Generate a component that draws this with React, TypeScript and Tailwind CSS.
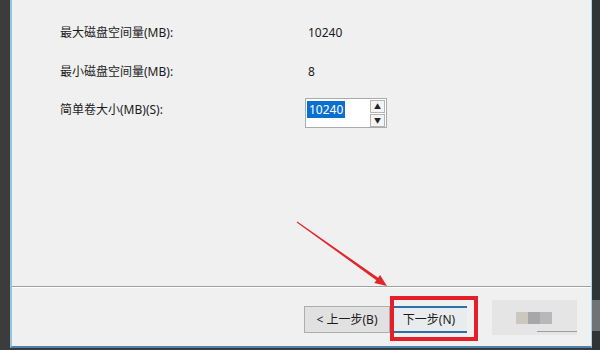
import React from "react";

const font = { fontFamily: '"Noto Sans", "Noto Sans CJK SC", sans-serif' };

function SpinBox() {
  return (
    <div className="flex h-[30px] w-[82px] border border-[#a8abb0] bg-white">
      <div className="flex-1 pl-[1px] pt-[2px]">
        <span className="inline-block h-[17px] bg-[#0a6fcf] px-[2px] text-[12px] leading-[17px] text-white">
          10240
        </span>
      </div>
      <div className="mr-[1px] mt-[1px] flex w-[15px] flex-col gap-[1px]">
        <div className="flex h-[13px] items-center justify-center border border-[#b5b5b5] bg-[#f4f4f4] text-[7px] leading-none text-[#222]">
          ▲
        </div>
        <div className="flex h-[13px] items-center justify-center border border-[#b5b5b5] bg-[#f4f4f4] text-[7px] leading-none text-[#222]">
          ▼
        </div>
      </div>
    </div>
  );
}

function BlurredButton() {
  return (
    <div className="relative h-[35px] w-[85px] bg-[#e5e5e5] blur-[0.6px]">
      <div className="absolute left-[24px] top-[12px] flex h-[12px]">
        <div className="w-[12px] bg-[#cbc8c0]" />
        <div className="w-[12px] bg-[#a7a7a9]" />
        <div className="w-[12px] bg-[#b8b8ba]" />
      </div>
      <div className="absolute bottom-[3px] right-0 h-[1px] w-[40px] bg-[#9c9c9c]" />
    </div>
  );
}

export default function App() {
  return (
    <div className="relative flex h-[350px] w-[600px] overflow-hidden bg-[#383938] text-[#1b1b1b]" style={font}>
      <div className="w-[10px] bg-[#3b3c3b]" />

      <div className="flex h-[348px] flex-1 flex-col border-b-2 border-l-2 border-r border-b-[#4d83ad] border-l-[#93c6de] border-r-[#a9d3ea] bg-[#f0f0f0]">
        <div className="h-[287px] border-b border-[#a0a0a0] pl-[48px] pt-[25px] text-[12px]">
          <div className="flex h-[16px] items-center">
            <span className="w-[248px]">最大磁盘空间量(MB):</span>
            <span>10240</span>
          </div>
          <div className="mt-[23px] flex h-[16px] items-center">
            <span className="w-[248px]">最小磁盘空间量(MB):</span>
            <span>8</span>
          </div>
          <div className="mt-[18px] flex items-start">
            <span className="mt-[1px] w-[245px] leading-[17px] pt-[2px]">简单卷大小(MB)(S):</span>
            <SpinBox />
          </div>
        </div>

        <div className="flex flex-1 items-start border-t border-white pl-[292px] pt-[12px] text-[12px]">
          <button className="mt-[6px] flex h-[27px] w-[86px] items-center justify-center border border-[#adadad] bg-[#e1e1e1]">
            &lt; 上一步(B)
          </button>
          <button className="ml-[1px] mt-[6px] flex h-[27px] w-[76px] items-center justify-center border-y-2 border-y-[#2f6fa8] bg-[#e8ecee]">
            下一步(N)
          </button>
          <div className="ml-[25px]">
            <BlurredButton />
          </div>
        </div>
      </div>

      <div className="flex w-[8px] flex-col bg-[#2f3537]">
        <div className="mt-[300px] h-[31px] w-[8px] bg-[#6f7374]" />
      </div>

      <div className="absolute left-[390px] top-[296px] h-[45px] w-[88px] border-4 border-[#e3202a]" />

      <svg className="pointer-events-none absolute left-0 top-0" width="600" height="350">
        <polygon
          points="297.3,221.6 378.1,277.8 380.1,274.9 387,286 374.3,283.1 376.3,280.2 296.7,222.4"
          fill="#e0282c"
        />
      </svg>
    </div>
  );
}
